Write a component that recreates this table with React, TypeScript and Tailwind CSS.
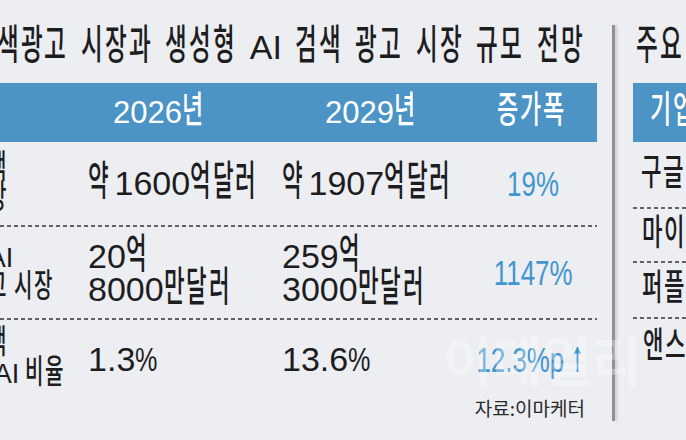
import React from "react";

const HANGUL = /[\uac00-\ud7a3]/;

// hangul in the graphic is a tall, narrow face: enlarge each syllable and squeeze it
const NARROW: Record<string, [string, string]> = {
  a: [
    "inline-block w-[0.66em]",
    "inline-block origin-left scale-x-[0.55] text-[1.2em] leading-[0] font-medium",
  ],
  b: [
    "inline-block w-[0.74em]",
    "inline-block origin-left scale-x-[0.62] text-[1.2em] leading-[0] font-medium",
  ],
  c: [
    "inline-block w-[0.7em]",
    "inline-block origin-left scale-x-[0.58] text-[1.2em] leading-[0] font-medium",
  ],
};

const GAP: Record<string, string> = {
  s: "inline-block w-[0.12em]",
  m: "inline-block w-[0.22em]",
  l: "inline-block w-[0.38em]",
};

function Kr({ t, r = "a", gap = "m" }: { t: string; r?: "a" | "b" | "c"; gap?: "s" | "m" | "l" }) {
  const [outer, inner] = NARROW[r];
  return (
    <>
      {Array.from(t).map((c, i) => {
        if (HANGUL.test(c))
          return (
            <span key={i} className={outer}>
              <span className={inner}>{c}</span>
            </span>
          );
        if (c === " ") return <span key={i} className={GAP[gap]} />;
        if (c === "%")
          return (
            <span key={i} className="inline-block w-[0.66em]">
              <span className="inline-block origin-left scale-x-[0.74]">%</span>
            </span>
          );
        return <React.Fragment key={i}>{c}</React.Fragment>;
      })}
    </>
  );
}

function Dash() {
  return (
    <div className="h-[2px] bg-[linear-gradient(to_right,#5f6266_4px,transparent_4px)] bg-[length:7px_2px]" />
  );
}

function Label({ lines }: { lines: string[] }) {
  return (
    <div className="ml-[-78px] whitespace-nowrap text-[27px] leading-[30px]">
      {lines.map((l) => (
        <div key={l}>
          <Kr t={l} r="b" />
        </div>
      ))}
    </div>
  );
}

function Value({ lines }: { lines: string[] }) {
  return (
    <div className="whitespace-nowrap text-[34px] leading-[33px]">
      {lines.map((l) => (
        <div key={l}>
          <Kr t={l} gap="s" />
        </div>
      ))}
    </div>
  );
}

function Growth({ text, arrow }: { text: string; arrow?: boolean }) {
  return (
    <div
      className={`flex items-center justify-center text-[35px] leading-none text-[#4296ce] ${
        arrow ? "pr-[24px]" : ""
      }`}
    >
      <span className="inline-block shrink-0 scale-x-[0.74]">{text}</span>
      {arrow && (
        <svg width="9" height="28" viewBox="0 0 9 28" className="ml-[-7px] shrink-0">
          <path d="M4.5 27V2" stroke="#4296ce" strokeWidth="1.6" />
          <path d="M1 8.5L4.5 1.5L8 8.5Z" fill="#4296ce" />
        </svg>
      )}
    </div>
  );
}

const cols = "grid grid-cols-[88px_194px_188px_127px] items-center";

export default function App() {
  return (
    <div className="relative flex h-[440px] w-[686px] overflow-hidden bg-[#eceef1] font-['Liberation_Sans','Noto_Sans_CJK_KR',sans-serif] text-[#1d1d1f]">
      <div className="w-[612px] shrink-0">
        <div className="ml-[-27px] h-[83px] whitespace-nowrap pt-[30px] text-[34px] leading-none">
          <Kr t="검색광고 시장과 생성형 AI 검색 광고 시장 규모 전망" r="c" gap="l" />
        </div>

        <div className="w-[597px]">
          <div className={`${cols} h-[59px] bg-[#4b94c5] text-[31px] leading-none text-white`}>
            <div />
            <div className="pl-[25px]">
              <Kr t="2026년" r="b" />
            </div>
            <div className="pl-[43px]">
              <Kr t="2029년" r="b" />
            </div>
            <div className="pr-[4px] text-center">
              <Kr t="증가폭" r="b" />
            </div>
          </div>

          <div className={`${cols} h-[83px]`}>
            <Label lines={["전체 검색", "광고 시장"]} />
            <Value lines={["약 1600억달러"]} />
            <Value lines={["약 1907억달러"]} />
            <Growth text="19%" />
          </div>
          <Dash />

          <div className={`${cols} h-[91px]`}>
            <Label lines={["생성형 AI", "검색 광고 시장"]} />
            <Value lines={["20억", "8000만달러"]} />
            <Value lines={["259억", "3000만달러"]} />
            <Growth text="1147%" />
          </div>
          <Dash />

          <div className={`${cols} h-[78px]`}>
            <Label lines={["전체 검색", "검색 중 AI 비율"]} />
            <Value lines={["1.3%"]} />
            <Value lines={["13.6%"]} />
            <Growth text="12.3%p" arrow />
          </div>

          <div className="pr-[12px] text-right font-['Noto_Sans_CJK_KR',sans-serif] text-[19px] leading-none text-[#2a2a2a]">
            자료:이마케터
          </div>
        </div>
      </div>

      <div className="mt-[25px] h-[396px] w-[3px] shrink-0 bg-[#8e9196] shadow-[2px_0_3px_rgba(0,0,0,0.15)]" />

      <div className="min-w-0 flex-1 overflow-hidden pl-[18px]">
        <div className="ml-[3px] h-[83px] whitespace-nowrap pt-[30px] text-[34px] leading-none">
          <Kr t="주요 생성형 AI 검색 서비스" r="c" gap="l" />
        </div>
        <div className="flex h-[59px] items-center whitespace-nowrap bg-[#4b94c5] pl-[17px] text-[31px] leading-none text-white">
          <Kr t="기업" r="b" />
        </div>
        <div className="flex h-[65px] items-center whitespace-nowrap pl-[8px] text-[30px] leading-none">
          <Kr t="구글" r="b" />
        </div>
        <Dash />
        <div className="flex h-[52px] items-center whitespace-nowrap pl-[9px] text-[30px] leading-none">
          <Kr t="마이크로소프트" r="b" />
        </div>
        <Dash />
        <div className="flex h-[54px] items-center whitespace-nowrap pl-[9px] text-[30px] leading-none">
          <Kr t="퍼플렉시티" r="b" />
        </div>
        <Dash />
        <div className="flex h-[58px] items-center whitespace-nowrap pl-[10px] text-[30px] leading-none">
          <Kr t="앤스로픽" r="b" />
        </div>
      </div>

      <div className="pointer-events-none absolute left-[443px] top-[332px] whitespace-nowrap font-['Noto_Sans_CJK_KR',sans-serif] text-[54px] font-bold leading-none text-white/30">
        이데일리
      </div>
    </div>
  );
}
